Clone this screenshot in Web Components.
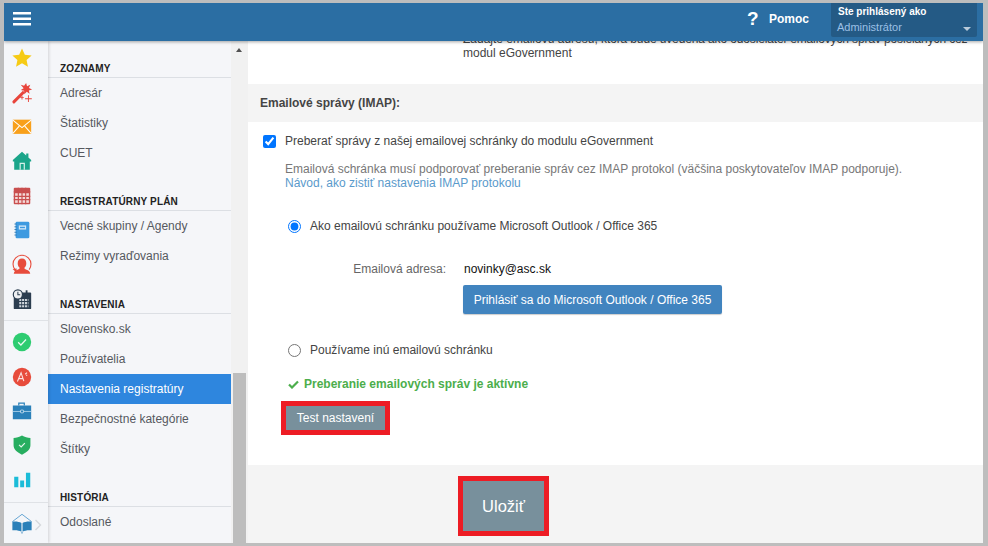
<!DOCTYPE html>
<html lang="sk">
<head>
<meta charset="utf-8">
<title>Nastavenia registratúry</title>
<style>
html, body { margin: 0; height: 100%; }
body {
    background: #bdbdbd;
    font: 12px/14px "Liberation Sans", Arial, sans-serif;
    color: #333;
    padding: 3px 5px 3px 4px;
    box-sizing: border-box;
    overflow: hidden;
}
</style>
</head>
<body>
<app-shell>
    <app-header slot="header"></app-header>
    <icon-rail slot="rail"></icon-rail>
    <side-nav slot="nav">
        <nav-section heading="ZOZNAMY">
            <nav-item>Adresár</nav-item>
            <nav-item>Štatistiky</nav-item>
            <nav-item>CUET</nav-item>
        </nav-section>
        <nav-section heading="REGISTRATÚRNY PLÁN">
            <nav-item>Vecné skupiny / Agendy</nav-item>
            <nav-item>Režimy vyraďovania</nav-item>
        </nav-section>
        <nav-section heading="NASTAVENIA">
            <nav-item>Slovensko.sk</nav-item>
            <nav-item>Používatelia</nav-item>
            <nav-item active>Nastavenia registratúry</nav-item>
            <nav-item>Bezpečnostné kategórie</nav-item>
            <nav-item>Štítky</nav-item>
        </nav-section>
        <nav-section heading="HISTÓRIA">
            <nav-item>Odoslané</nav-item>
        </nav-section>
    </side-nav>
    <settings-panel slot="main"></settings-panel>
</app-shell>

<script>
const RAIL_ICONS = {
    star: `<path fill="#f6cb15" d="M12 1.500l3.100 6.900 7.400.8-5.500 5 1.500 7.400-6.500-3.800-6.500 3.800 1.500-7.400-5.500-5 7.400-.8z"/>`,
    wand: `<path fill="#e8453c" d="M2 20.500l11-11 2.300 2.300-11 11a1.600 1.600 0 0 1-2.300-2.300z"/>
           <path fill="#e8453c" d="M16.500 1l1 3.600L21 3l-1.400 3.600L23 8.200l-3.500 1 .8 3.700-3.100-2.200-2.600 2.700-.3-3.800-3.600-.8 3.100-2.100L10.600 3l3.700 1.100z"/>
           <path fill="#e8453c" d="M18.500 14.500h1v3.200h3.200v1h-3.200v3.200h-1v-3.200h-3.200v-1h3.200zM11.500 15h1v1.500h1.500v1h-1.500V19h-1v-1.500H10v-1h1.500z"/>`,
    mail: `<rect x="2" y="4" width="20" height="15.500" fill="#f8a01b"/>
           <path fill="none" stroke="#fff" stroke-width="1.100" d="M2 4.600l10 8 10-8M2 19l7-8M22 19l-7-8"/>`,
    home: `<path fill="#1aa58a" d="M12 2l4.600 4V3.800h2.400V8.100L22 11v1.500h-1.500V21.500h-17V12.500H2V11z"/>
           <path fill="none" stroke="#d6f0ea" stroke-width="1.300" d="M10 21.500v-7h4.500v7"/>`,
    grid: `<rect x="3" y="3" width="18" height="18" rx="1" fill="#c94f4f"/>
           <rect x="4.500" y="9" width="15" height="10.500" fill="#f3d9d7"/>
           <path stroke="#c94f4f" stroke-width="1.300" d="M8 3v18M12 3v18M16 3v18M3 12.500h18M3 16h18M3 7.500h18"/>`,
    notebook: `<rect x="5" y="3" width="15" height="18" rx="1.500" fill="#3d9ae0"/>
               <rect x="8.500" y="7" width="8" height="4.500" fill="#cfe6f8"/><rect x="9.800" y="8.500" width="5.400" height="1.500" fill="#3d9ae0"/>
               <path stroke="#2c78b4" stroke-width="1" d="M3.800 5.500h2.500M3.800 8.500h2.500M3.800 11.500h2.500M3.800 14.500h2.500M3.800 17.500h2.500"/>`,
    person: `<path fill="#e74c3c" d="M12 5c2.900 0 4.700 2.100 4.700 5 0 2.100-.9 3.900-2.100 5 .1 1.100.6 1.500 2.300 2.100 2 .7 3.600 1.500 4.100 4.400H3c.5-2.900 2.100-3.700 4.100-4.400 1.700-.6 2.200-1 2.300-2.100-1.200-1.100-2.100-2.900-2.100-5 0-2.900 1.800-5 4.700-5z"/>
             <path fill="none" stroke="#e74c3c" stroke-width="1.200" d="M4.600 17.500A9.800 9.800 0 0 1 2.200 11 9.800 9.800 0 0 1 12 1.300 9.800 9.800 0 0 1 21.800 11a9.800 9.800 0 0 1-2 6"/>
             <path fill="#e74c3c" d="M1.800 16.300l4.500-.6-.8 4.300z"/>`,
    calendar: `<rect x="3" y="5" width="19" height="18" rx="1" fill="#2c3e50"/>
               <rect x="16" y="2.500" width="2" height="4" fill="#2c3e50"/>
               <path stroke="#cfd6dc" stroke-width="2.200" stroke-dasharray="2.200 .9" d="M9 13h10M9 16.500h10M9 20h10"/>
               <circle cx="7.500" cy="7" r="5" fill="#eef0f2" stroke="#2c3e50" stroke-width="1.300"/>
               <path fill="none" stroke="#2c3e50" stroke-width="1.100" d="M7.500 4v3.300h2.500"/>`,
    check: `<circle cx="12" cy="12" r="10" fill="#2ecc71"/>
            <path fill="none" stroke="#eafaf1" stroke-width="1.300" d="M7.800 12.300l3 3 5.600-6"/>`,
    spell: `<circle cx="12" cy="12" r="10" fill="#e74c3c"/>
            <path fill="none" stroke="#fbe3e0" stroke-width="1.200" d="M7 17l4-9.500 3 9M8.500 13.800h4.500M15.500 9l2-1.800M16.500 10.500l1.200-.8"/>`,
    briefcase: `<path fill="none" stroke="#2a80b9" stroke-width="1.300" d="M8.500 6V3.500h6V6"/>
                <rect x="2" y="6" width="20" height="15" fill="#2a80b9"/>
                <path stroke="#a9cfe8" stroke-width="1" d="M2 12.500h20"/>
                <rect x="10.300" y="11" width="3.500" height="3" rx=".8" fill="#2a80b9" stroke="#d3e6f3" stroke-width=".9"/>`,
    shield: `<path fill="#27ae60" d="M12 1.500c2.800 1.800 6.200 2.700 9.200 2.800v8c0 4.400-4 8-9.200 10.200-5.200-2.200-9.200-5.800-9.200-10.200v-8C5.800 4.200 9.200 3.300 12 1.500z"/>
             <path fill="none" stroke="#e4f6ec" stroke-width="1.300" d="M8.800 11.800l2.300 2.300 4-4.200"/>`,
    chart: `<path fill="#1bbcd8" d="M3.500 8.500h4.500V20H3.500zM10 12.500h4.300V20H10zM16.300 4h4.700v16h-4.700z"/>`,
    book: `<path fill="none" stroke="#5a9fd0" stroke-width="1" d="M1.500 10.500L12 2.500l10.500 8"/>
           <path fill="#2a80b9" d="M1.500 10.500c3.500-.5 7.500 0 9.900 1.500v9.500c-2.500-1.500-6.400-2-9.900-1.500zM22.500 10.500c-3.500-.5-7.500 0-9.900 1.500v9.500c2.500-1.500 6.400-2 9.900-1.500z"/>
           <path fill="none" stroke="#2a80b9" stroke-width="1" d="M12 21.800V23.500"/>`
};

class AppShell extends HTMLElement
{
    constructor()
    {
        super();
        this.attachShadow({ mode: "open" });
        this.shadowRoot.innerHTML = `
            <style>
                :host { display: flex; flex-direction: column; width: 979px; height: 540px; background: #fff; overflow: hidden; }
                .body { flex: 1; display: flex; min-height: 0; }
            </style>
            <slot name="header"></slot>
            <div class="body">
                <slot name="rail"></slot>
                <slot name="nav"></slot>
                <slot name="main"></slot>
            </div>
        `;
    }
}

class AppHeader extends HTMLElement
{
    constructor()
    {
        super();
        this.attachShadow({ mode: "open" });
        this.shadowRoot.innerHTML = `
            <style>
                :host {
                    display: flex; align-items: flex-start; flex: none; height: 38px;
                    background: #2b6ea3; color: #fff;
                    box-shadow: 0 1px 3px rgba(0,0,0,.35);
                    position: relative; z-index: 2;
                }
                .burger { display: block; margin: 9px 0 0 9px; flex: none; }
                .help { margin-left: auto; display: flex; align-items: center; height: 34px; font-weight: bold; }
                .mark { font-size: 19px; width: 11px; margin-right: 11px; text-align: center; position: relative; top: -1px; }
                .label { font-size: 12px; margin-right: 22px; position: relative; top: -1px; }
                .user {
                    width: 146px; height: 34px; box-sizing: border-box; margin-right: 6px;
                    background: #245a85; border-radius: 0 0 2px 2px;
                    padding: 2px 7px 0 7px; position: relative;
                    font-size: 11px; line-height: 14px;
                }
                .who { font-weight: bold; display: block; font-size: 10px; }
                .role { color: #9cc0e6; display: block; margin: 1px 0 0 -1px; font-size: 11px; }
                .caret {
                    position: absolute; right: 6px; top: 24px; width: 0; height: 0;
                    border: 4px solid transparent; border-top: 4px solid #b9cbdb; border-bottom: 0;
                }
            </style>
            <svg class="burger" width="18" height="14" viewBox="0 0 18 14"><path fill="#fff" d="M0 0h18v2.500H0zM0 5.500h18V8H0zM0 11h18v2.500H0z"/></svg>
            <div class="help"><span class="mark">?</span><span class="label">Pomoc</span></div>
            <div class="user">
                <span class="who">Ste prihlásený ako</span>
                <span class="role">Administrátor</span>
                <span class="caret"></span>
            </div>
        `;
    }
}

class RailIcon extends HTMLElement
{
    constructor()
    {
        super();
        this.attachShadow({ mode: "open" });
    }

    connectedCallback()
    {
        this.shadowRoot.innerHTML = `
            <style>
                :host { display: flex; align-items: center; height: 34.4px; padding-left: 6.500px; }
                svg { display: block; }
            </style>
            <svg width="22" height="22" viewBox="0 0 24 24">${RAIL_ICONS[this.getAttribute("name")]}</svg>
        `;
    }
}

class IconRail extends HTMLElement
{
    constructor()
    {
        super();
        this.attachShadow({ mode: "open" });
        const group = (names) => names.map(n => `<rail-icon name="${n}"></rail-icon>`).join("");
        this.shadowRoot.innerHTML = `
            <style>
                :host {
                    display: flex; flex-direction: column; flex: none; width: 44px; box-sizing: border-box;
                    background: #f4f6f9; box-shadow: 1px 0 3px rgba(0,0,0,.14);
                    position: relative; z-index: 1;
                }
                .top { height: 280px; box-sizing: border-box; border-bottom: 1px solid #dfe2e6; }
                .mid { padding-top: 4px; height: 182px; box-sizing: border-box; border-bottom: 1px solid #dfe2e6; }
                .foot { flex: 1; display: flex; align-items: center; position: relative; }
                .chev { position: absolute; left: 30px; top: 16px; }
            </style>
            <div class="top">${group(["star", "wand", "mail", "home", "grid", "notebook", "person", "calendar"])}</div>
            <div class="mid">${group(["check", "spell", "briefcase", "shield", "chart"])}</div>
            <div class="foot">
                <rail-icon name="book"></rail-icon>
                <svg class="chev" width="8" height="12" viewBox="0 0 8 12"><path fill="none" stroke="#d5d8dc" stroke-width="1.400" d="M1.500 1l5 5-5 5"/></svg>
            </div>
        `;
    }
}

class SideNav extends HTMLElement
{
    constructor()
    {
        super();
        this.attachShadow({ mode: "open" });
        this.shadowRoot.innerHTML = `
            <style>
                :host { display: flex; flex: none; width: 200px; min-height: 0; }
                .list { width: 183px; flex: none; background: #f5f6f9; overflow: hidden; }
                .scrolled { margin-top: -6px; }
                .bar { flex: 1; background: #f1f1f1; display: flex; flex-direction: column; align-items: flex-start; }
                .up { width: 0; height: 0; margin: 7px 0 0 5px; border: 3.500px solid transparent; border-bottom: 4px solid #505050; border-top: 0; }
                .thumb { margin: auto 0 0 2px; width: 13px; height: 170px; background: #bdbdbd; }
            </style>
            <div class="list"><div class="scrolled"><slot></slot></div></div>
            <div class="bar"><span class="up"></span><span class="thumb"></span></div>
        `;
    }
}

class NavSection extends HTMLElement
{
    constructor()
    {
        super();
        this.attachShadow({ mode: "open" });
    }

    connectedCallback()
    {
        this.shadowRoot.innerHTML = `
            <style>
                :host { display: block; }
                h3 {
                    margin: 0; height: 43px; box-sizing: border-box; padding: 0 0 2px 12px;
                    display: flex; align-items: flex-end;
                    font-size: 10px; line-height: 13px; font-weight: bold; letter-spacing: .15px;
                    color: #222; border-bottom: 1px solid #dcdfe4;
                }
            </style>
            <h3>${this.getAttribute("heading")}</h3>
            <slot></slot>
        `;
    }
}

class NavItem extends HTMLElement
{
    constructor()
    {
        super();
        this.attachShadow({ mode: "open" });
        this.shadowRoot.innerHTML = `
            <style>
                :host {
                    display: flex; align-items: center; height: 30px; padding-left: 12px;
                    color: #55595f; font-size: 12px;
                }
                :host([active]) { background: #2e86de; color: #fff; }
            </style>
            <slot></slot>
        `;
    }
}

class FlatButton extends HTMLElement
{
    constructor()
    {
        super();
        this.attachShadow({ mode: "open" });
        this.shadowRoot.innerHTML = `
            <style>
                :host {
                    display: flex; align-items: center; justify-content: center; box-sizing: border-box;
                    color: #fff; background: #78909c; height: 24px; width: 99px; font-size: 12px;
                }
                :host([variant="primary"]) { background: #4184bf; height: 29px; width: 259px; border-radius: 2px; box-shadow: 0 1px 1px rgba(0,0,0,.2); }
                :host([variant="large"]) { height: 50px; width: 81px; font-size: 16.500px; }
            </style>
            <slot></slot>
        `;
    }
}

class RedMark extends HTMLElement
{
    constructor()
    {
        super();
        this.attachShadow({ mode: "open" });
        this.shadowRoot.innerHTML = `
            <style>
                :host { display: block; width: fit-content; border: 5px solid #ed1c24; }
            </style>
            <slot></slot>
        `;
    }
}

class OptionRow extends HTMLElement
{
    constructor()
    {
        super();
        this.attachShadow({ mode: "open" });
    }

    connectedCallback()
    {
        const type = this.getAttribute("type");
        const checked = this.hasAttribute("checked") ? "checked" : "";
        this.shadowRoot.innerHTML = `
            <style>
                :host { display: flex; align-items: center; height: 14px; color: #444; }
                input { width: 13px; height: 13px; margin: 0; flex: none; accent-color: #0075ff; }
                span { margin-left: var(--label-gap, 9px); }
            </style>
            <input type="${type}" name="box" ${checked}>
            <span><slot></slot></span>
        `;
    }
}

class SettingsPanel extends HTMLElement
{
    constructor()
    {
        super();
        this.attachShadow({ mode: "open" });
        this.shadowRoot.innerHTML = `
            <style>
                :host { display: flex; flex-direction: column; flex: 1; min-width: 0; overflow: hidden; background: #fff; color: #444; }
                .intro { margin: -9px 16px 24px 215px; white-space: nowrap; }
                .intro span { letter-spacing: -.13px; }
                .band { height: 38px; flex: none; display: flex; align-items: center; padding: 0 12px; background: #f4f4f4; font-weight: bold; color: #444; }
                .body { flex: 1; padding: 12px 0 0 15px; }
                .note { margin: 14px 0 0 22px; color: #777; }
                .note a { color: #5a9acb; text-decoration: none; display: block; }
                .opt1 { margin: 29px 0 0 25px; }
                .opt2 { margin: 0 0 0 25px; }
                .field { display: flex; margin: 29px 0 0 0; }
                .field label { width: 183px; text-align: right; color: #666; flex: none; }
                .field b { font-weight: normal; color: #111; margin-left: 18px; }
                .signin { display: flex; margin: 9px 0 29px 200px; }
                .status { display: flex; align-items: center; margin: 20px 0 10px 25px; color: #4cae4c; font-weight: bold; }
                .status svg { margin-right: 5px; }
                .test { margin-left: 18px; }
                .foot { flex: none; height: 78px; background: #f4f4f4; padding: 11px 0 0 210px; box-sizing: border-box; }
            </style>
            <div class="intro">Zadajte emailovú adresu, <span>ktorá bude uvedená ako odosielateľ emailových správ posielaných cez</span><br>modul eGovernment</div>
            <div class="band">Emailové správy (IMAP):</div>
            <div class="body">
                <option-row type="checkbox" checked>Preberať správy z našej emailovej schránky do modulu eGovernment</option-row>
                <div class="note">Emailová schránka musí podporovať preberanie správ cez IMAP protokol (väčšina poskytovateľov IMAP podporuje).<a href="#">Návod, ako zistiť nastavenia IMAP protokolu</a></div>
                <option-row class="opt1" type="radio" checked>Ako emailovú schránku používame Microsoft Outlook / Office 365</option-row>
                <div class="field"><label>Emailová adresa:</label><b>novinky@asc.sk</b></div>
                <div class="signin"><flat-button variant="primary">Prihlásiť sa do Microsoft Outlook / Office 365</flat-button></div>
                <option-row class="opt2" type="radio">Používame inú emailovú schránku</option-row>
                <div class="status"><svg width="11" height="9" viewBox="0 0 11 9"><path fill="none" stroke="#4cae4c" stroke-width="2.200" d="M1 4.500l3 3 6-6"/></svg>Preberanie emailových správ je aktívne</div>
                <red-mark class="test"><flat-button>Test nastavení</flat-button></red-mark>
            </div>
            <div class="foot"><red-mark><flat-button variant="large">Uložiť</flat-button></red-mark></div>
        `;
    }
}

window.customElements.define("app-shell", AppShell);
window.customElements.define("app-header", AppHeader);
window.customElements.define("rail-icon", RailIcon);
window.customElements.define("icon-rail", IconRail);
window.customElements.define("side-nav", SideNav);
window.customElements.define("nav-section", NavSection);
window.customElements.define("nav-item", NavItem);
window.customElements.define("flat-button", FlatButton);
window.customElements.define("red-mark", RedMark);
window.customElements.define("option-row", OptionRow);
window.customElements.define("settings-panel", SettingsPanel);
</script>
</body>
</html>
